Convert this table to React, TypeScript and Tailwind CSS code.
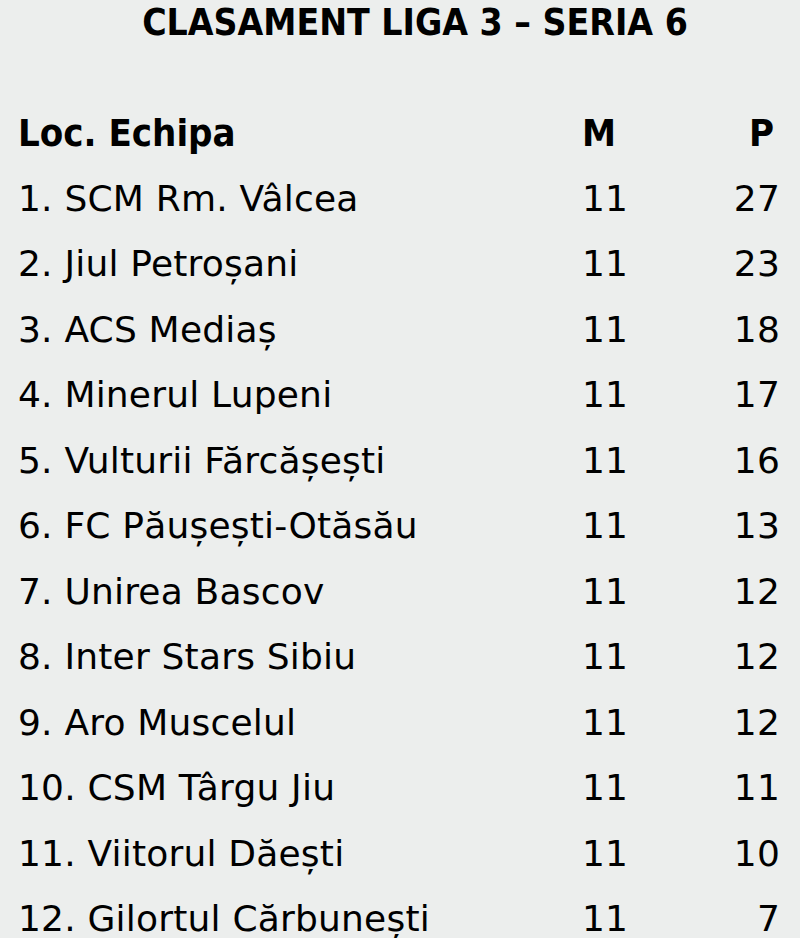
const rows = [
  { name: "1. SCM Rm. Vâlcea", m: 11, p: 27 },
  { name: "2. Jiul Petroșani", m: 11, p: 23 },
  { name: "3. ACS Mediaș", m: 11, p: 18 },
  { name: "4. Minerul Lupeni", m: 11, p: 17 },
  { name: "5. Vulturii Fărcășești", m: 11, p: 16 },
  { name: "6. FC Păușești-Otăsău", m: 11, p: 13 },
  { name: "7. Unirea Bascov", m: 11, p: 12 },
  { name: "8. Inter Stars Sibiu", m: 11, p: 12 },
  { name: "9. Aro Muscelul", m: 11, p: 12 },
  { name: "10. CSM Târgu Jiu", m: 11, p: 11 },
  { name: "11. Viitorul Dăești", m: 11, p: 10 },
  { name: "12. Gilortul Cărbunești", m: 11, p: 7 },
];

export default function App() {
  return (
    <div className="w-[800px] h-[938px] overflow-hidden bg-[#eceeed] text-black font-['DejaVu_Sans',sans-serif]">
      <h1 className="pl-[30px] pt-[2px] h-[100px] text-center text-[37px] leading-[42px] font-bold font-['DejaVu_Sans_Condensed','DejaVu_Sans',sans-serif]">
        CLASAMENT LIGA 3 – SERIA 6
      </h1>
      <div className="flex items-center h-[66px] pl-[18px] text-[38px] font-bold font-['DejaVu_Sans_Condensed','DejaVu_Sans',sans-serif]">
        <span className="flex-1">Loc. Echipa</span>
        <span className="w-[48px]">M</span>
        <span className="w-[170px] pr-[26px] text-right">P</span>
      </div>
      {rows.map((r) => (
        <div key={r.name} className="flex items-center h-[65.5px] pl-[18px] text-[36px] tracking-[0.2px]">
          <span className="flex-1">{r.name}</span>
          <span className="w-[48px]">{r.m}</span>
          <span className="w-[170px] pr-[20px] text-right">{r.p}</span>
        </div>
      ))}
    </div>
  );
}
